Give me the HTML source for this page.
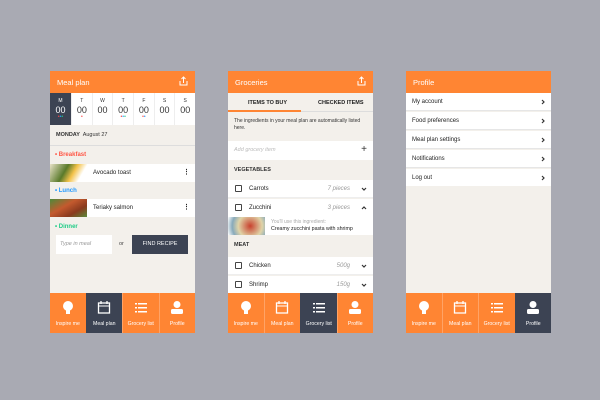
<!DOCTYPE html><html><head><meta charset="utf-8"><style>
*{box-sizing:border-box;margin:0;padding:0}
body{width:600px;height:400px;background:#a9aab3;font-family:"Liberation Sans",sans-serif;position:relative;overflow:hidden}
.ph{position:absolute;top:71px;width:145px;height:262px;background:#f3f0eb;overflow:hidden}
.hd{position:absolute;left:0;top:0;width:145px;height:22px;background:#ff8533;color:#fff;font-size:7.5px;padding:7px 0 0 7px}
.sh{position:absolute;right:7px;top:5px}
.a{position:absolute}
.row{position:absolute;left:0;width:145px;background:#fff;font-size:6px;color:#222}
.nav{position:absolute;left:0;top:222px;width:145px;height:40px;display:flex;background:#ff8533}
.nav div{flex:1;position:relative;border-left:1px solid #ffa366;color:#fff;font-size:5.2px;text-align:center}
.nav div:first-child{border-left:none}
.nav .on{background:#3c4353;border-left-color:#3c4353}
.nav svg{position:absolute;left:50%;top:7px;margin-left:-7px}
.nav span{position:absolute;left:0;right:0;top:28px}
.chev{position:absolute;right:6px}
.cb{position:absolute;left:7px;width:7px;height:7px;border:1px solid #444;border-radius:1px}
.it{font-style:italic;color:#999}
</style></head><body>

<!-- Screen 1 -->
<div class="ph" style="left:50px">
<div class="hd">Meal plan<svg class="sh" width="9" height="10" viewBox="0 0 9 10"><path d="M1 5v4h7V5M4.5 1v6M2.5 3l2-2 2 2" stroke="#fff" stroke-width="1" fill="none"/></svg></div>
<div class="a" style="top:22px;left:0;width:145px;height:32px;background:#fff;display:flex">
<div style="width:21px;background:#3c4353;color:#fff;text-align:center;position:relative"><div style="font-size:5px;margin-top:5px">M</div><div style="font-size:9px;margin-top:1px">00</div><div style="font-size:5px;letter-spacing:0;margin-top:-1px"><span style="color:#f44">•</span><span style="color:#29f">•</span><span style="color:#2c8">•</span></div></div>
<div style="flex:1;display:flex;color:#333;text-align:center">
<div style="flex:1;border-left:1px solid #eee"><div style="font-size:5px;margin-top:5px">T</div><div style="font-size:9px;margin-top:1px">00</div><div style="font-size:5px;margin-top:-1px;color:#f44">•</div></div>
<div style="flex:1;border-left:1px solid #eee"><div style="font-size:5px;margin-top:5px">W</div><div style="font-size:9px;margin-top:1px">00</div></div>
<div style="flex:1;border-left:1px solid #eee"><div style="font-size:5px;margin-top:5px">T</div><div style="font-size:9px;margin-top:1px">00</div><div style="font-size:5px;margin-top:-1px"><span style="color:#f44">•</span><span style="color:#29f">•</span><span style="color:#2c8">•</span></div></div>
<div style="flex:1;border-left:1px solid #eee"><div style="font-size:5px;margin-top:5px">F</div><div style="font-size:9px;margin-top:1px">00</div><div style="font-size:5px;margin-top:-1px"><span style="color:#f44">•</span><span style="color:#29f">•</span></div></div>
<div style="flex:1;border-left:1px solid #eee"><div style="font-size:5px;margin-top:5px">S</div><div style="font-size:9px;margin-top:1px">00</div></div>
<div style="flex:1;border-left:1px solid #eee"><div style="font-size:5px;margin-top:5px">S</div><div style="font-size:9px;margin-top:1px">00</div></div>
</div></div>
<div class="a" style="top:61px;left:6px;font-size:5.5px;color:#333"><b>MONDAY</b>&nbsp; August 27</div>
<div class="a" style="top:74px;left:0;width:145px;height:1px;background:#ddd"></div>
<div class="a" style="top:81px;left:5px;font-size:6px;color:#f54;font-weight:bold">• Breakfast</div>
<div class="row" style="top:93px;height:18px"><div class="a" style="left:0;top:0;width:37px;height:18px;background:linear-gradient(120deg,#e8e2c8,#5a7a2a 40%,#f3c24a 60%,#fff 80%)"></div><span class="a" style="left:43px;top:6px">Avocado toast</span><span class="a" style="right:5px;top:4px;font-weight:bold;font-size:7px">⋮</span></div>
<div class="a" style="top:117px;left:5px;font-size:6px;color:#29f;font-weight:bold">• Lunch</div>
<div class="row" style="top:128px;height:18px"><div class="a" style="left:0;top:0;width:37px;height:18px;background:linear-gradient(150deg,#4d8a3a,#c45a2e 40%,#8a3a1e 70%,#5a8a3a)"></div><span class="a" style="left:43px;top:6px">Teriaky salmon</span><span class="a" style="right:5px;top:4px;font-weight:bold;font-size:7px">⋮</span></div>
<div class="a" style="top:153px;left:5px;font-size:6px;color:#2c8;font-weight:bold">• Dinner</div>
<div class="a" style="top:164px;left:6px;width:56px;height:19px;background:#fff;font-size:5.5px;padding:6px 0 0 4px" ><span class="it">Type in meal</span></div>
<div class="a" style="top:170px;left:69px;font-size:5.5px;color:#444">or</div>
<div class="a" style="top:164px;left:82px;width:56px;height:19px;background:#3c4353;color:#fff;font-size:5.5px;text-align:center;padding-top:6px">FIND RECIPE</div>
<div class="nav">
<div><svg width="14" height="16"><circle cx="7" cy="6" r="5" fill="#fff"/><rect x="5" y="10" width="4" height="4" fill="#fff"/></svg><span>Inspire me</span></div>
<div class="on"><svg width="14" height="16"><rect x="1.5" y="3" width="11" height="10" fill="none" stroke="#fff" stroke-width="1.3"/><line x1="1.5" y1="6" x2="12.5" y2="6" stroke="#fff"/><line x1="4" y1="1" x2="4" y2="4" stroke="#fff" stroke-width="1.3"/><line x1="10" y1="1" x2="10" y2="4" stroke="#fff" stroke-width="1.3"/></svg><span>Meal plan</span></div>
<div><svg width="14" height="16"><g fill="#fff"><rect x="1" y="3" width="2" height="1.5"/><rect x="4" y="3" width="9" height="1.5"/><rect x="1" y="7" width="2" height="1.5"/><rect x="4" y="7" width="9" height="1.5"/><rect x="1" y="11" width="2" height="1.5"/><rect x="4" y="11" width="9" height="1.5"/></g></svg><span>Grocery list</span></div>
<div><svg width="14" height="16"><circle cx="7" cy="4.5" r="3.5" fill="#fff"/><rect x="1" y="9" width="12" height="5" rx="1.5" fill="#fff"/></svg><span>Profile</span></div>
</div>
</div>

<!-- Screen 2 -->
<div class="ph" style="left:228px">
<div class="hd">Groceries<svg class="sh" width="9" height="10" viewBox="0 0 9 10"><path d="M1 5v4h7V5M4.5 1v6M2.5 3l2-2 2 2" stroke="#fff" stroke-width="1" fill="none"/></svg></div>
<div class="a" style="top:22px;left:0;width:145px;height:19px;font-size:5.5px;font-weight:bold;color:#222;border-bottom:1px solid #ddd">
<span class="a" style="left:20px;top:7px">ITEMS TO BUY</span><span class="a" style="left:90px;top:7px">CHECKED ITEMS</span>
<div class="a" style="left:0;top:17px;width:73px;height:2px;background:#ff8533"></div></div>
<div class="a" style="top:47px;left:6px;width:135px;font-size:5px;line-height:7px;color:#333">The ingredients in your meal plan are automatically listed here.</div>
<div class="row" style="top:70px;height:19px"><span class="a it" style="left:6px;top:6px;font-size:5.5px;color:#bbb">Add grocery item</span><span class="a" style="right:6px;top:3px;font-size:10px;color:#333">+</span></div>
<div class="a" style="top:96px;left:6px;font-size:5.5px;font-weight:bold;color:#333">VEGETABLES</div>
<div class="row" style="top:109px;height:18px;border-bottom:1px solid #eee"><div class="cb" style="top:5px"></div><span class="a" style="left:21px;top:6px">Carrots</span><span class="a it" style="right:23px;top:6px">7 pieces</span><svg class="chev" style="top:7px" width="6" height="4"><path d="M1 1l2 2 2-2" stroke="#333" stroke-width="1.2" fill="none"/></svg></div>
<div class="row" style="top:128px;height:36px"><div class="cb" style="top:5px"></div><span class="a" style="left:21px;top:6px">Zucchini</span><span class="a it" style="right:23px;top:6px">3 pieces</span><svg class="chev" style="top:7px" width="6" height="4"><path d="M1 3l2-2 2 2" stroke="#333" stroke-width="1.2" fill="none"/></svg>
<div class="a" style="left:0;top:18px;width:37px;height:18px;background:radial-gradient(circle at 60% 50%,#c8412e,#e0d4a8 50%,#8ab 75%,#fff)"></div>
<span class="a" style="left:43px;top:20px;font-size:5px;color:#aaa">You'll use this ingredient:</span><span class="a" style="left:43px;top:27px;font-size:5.3px">Creamy zucchini pasta with shrimp</span></div>
<div class="a" style="top:171px;left:6px;font-size:5.5px;font-weight:bold;color:#333">MEAT</div>
<div class="row" style="top:186px;height:18px;border-bottom:1px solid #eee"><div class="cb" style="top:5px"></div><span class="a" style="left:21px;top:6px">Chicken</span><span class="a it" style="right:23px;top:6px">500g</span><svg class="chev" style="top:7px" width="6" height="4"><path d="M1 1l2 2 2-2" stroke="#333" stroke-width="1.2" fill="none"/></svg></div>
<div class="row" style="top:205px;height:17px"><div class="cb" style="top:5px"></div><span class="a" style="left:21px;top:6px">Shrimp</span><span class="a it" style="right:23px;top:6px">150g</span><svg class="chev" style="top:7px" width="6" height="4"><path d="M1 1l2 2 2-2" stroke="#333" stroke-width="1.2" fill="none"/></svg></div>
<div class="nav">
<div><svg width="14" height="16"><circle cx="7" cy="6" r="5" fill="#fff"/><rect x="5" y="10" width="4" height="4" fill="#fff"/></svg><span>Inspire me</span></div>
<div><svg width="14" height="16"><rect x="1.5" y="3" width="11" height="10" fill="none" stroke="#fff" stroke-width="1.3"/><line x1="1.5" y1="6" x2="12.5" y2="6" stroke="#fff"/><line x1="4" y1="1" x2="4" y2="4" stroke="#fff" stroke-width="1.3"/><line x1="10" y1="1" x2="10" y2="4" stroke="#fff" stroke-width="1.3"/></svg><span>Meal plan</span></div>
<div class="on"><svg width="14" height="16"><g fill="#fff"><rect x="1" y="3" width="2" height="1.5"/><rect x="4" y="3" width="9" height="1.5"/><rect x="1" y="7" width="2" height="1.5"/><rect x="4" y="7" width="9" height="1.5"/><rect x="1" y="11" width="2" height="1.5"/><rect x="4" y="11" width="9" height="1.5"/></g></svg><span>Grocery list</span></div>
<div><svg width="14" height="16"><circle cx="7" cy="4.5" r="3.5" fill="#fff"/><rect x="1" y="9" width="12" height="5" rx="1.5" fill="#fff"/></svg><span>Profile</span></div>
</div>
</div>

<!-- Screen 3 -->
<div class="ph" style="left:406px">
<div class="hd">Profile</div>
<div class="row" style="top:22px;height:18px;border-bottom:1px solid #e6e6e6"><span class="a" style="left:6px;top:6px">My account</span><svg class="chev" style="top:6px" width="4" height="6"><path d="M1 1l2 2-2 2" stroke="#333" stroke-width="1.2" fill="none"/></svg></div>
<div class="row" style="top:41px;height:18px;border-bottom:1px solid #e6e6e6"><span class="a" style="left:6px;top:6px">Food preferences</span><svg class="chev" style="top:6px" width="4" height="6"><path d="M1 1l2 2-2 2" stroke="#333" stroke-width="1.2" fill="none"/></svg></div>
<div class="row" style="top:60px;height:18px;border-bottom:1px solid #e6e6e6"><span class="a" style="left:6px;top:6px">Meal plan settings</span><svg class="chev" style="top:6px" width="4" height="6"><path d="M1 1l2 2-2 2" stroke="#333" stroke-width="1.2" fill="none"/></svg></div>
<div class="row" style="top:79px;height:18px;border-bottom:1px solid #e6e6e6"><span class="a" style="left:6px;top:6px">Notifications</span><svg class="chev" style="top:6px" width="4" height="6"><path d="M1 1l2 2-2 2" stroke="#333" stroke-width="1.2" fill="none"/></svg></div>
<div class="row" style="top:98px;height:17px"><span class="a" style="left:6px;top:6px">Log out</span><svg class="chev" style="top:6px" width="4" height="6"><path d="M1 1l2 2-2 2" stroke="#333" stroke-width="1.2" fill="none"/></svg></div>
<div class="nav">
<div><svg width="14" height="16"><circle cx="7" cy="6" r="5" fill="#fff"/><rect x="5" y="10" width="4" height="4" fill="#fff"/></svg><span>Inspire me</span></div>
<div><svg width="14" height="16"><rect x="1.5" y="3" width="11" height="10" fill="none" stroke="#fff" stroke-width="1.3"/><line x1="1.5" y1="6" x2="12.5" y2="6" stroke="#fff"/><line x1="4" y1="1" x2="4" y2="4" stroke="#fff" stroke-width="1.3"/><line x1="10" y1="1" x2="10" y2="4" stroke="#fff" stroke-width="1.3"/></svg><span>Meal plan</span></div>
<div><svg width="14" height="16"><g fill="#fff"><rect x="1" y="3" width="2" height="1.5"/><rect x="4" y="3" width="9" height="1.5"/><rect x="1" y="7" width="2" height="1.5"/><rect x="4" y="7" width="9" height="1.5"/><rect x="1" y="11" width="2" height="1.5"/><rect x="4" y="11" width="9" height="1.5"/></g></svg><span>Grocery list</span></div>
<div class="on"><svg width="14" height="16"><circle cx="7" cy="4.5" r="3.5" fill="#fff"/><rect x="1" y="9" width="12" height="5" rx="1.5" fill="#fff"/></svg><span>Profile</span></div>
</div>
</div>
</body></html>
